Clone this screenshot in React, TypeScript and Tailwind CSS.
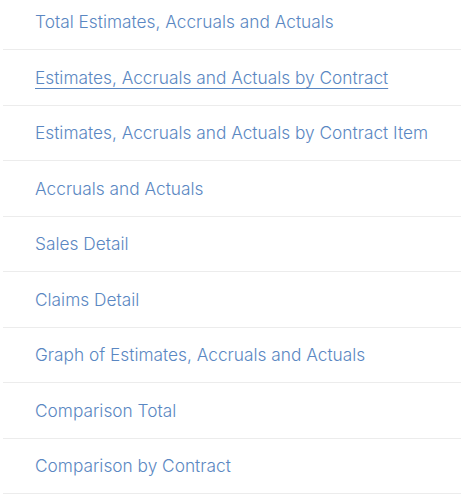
import React from "react";

const items = [
  "Total Estimates, Accruals and Actuals",
  "Estimates, Accruals and Actuals by Contract",
  "Estimates, Accruals and Actuals by Contract Item",
  "Accruals and Actuals",
  "Sales Detail",
  "Claims Detail",
  "Graph of Estimates, Accruals and Actuals",
  "Comparison Total",
  "Comparison by Contract",
];

export default function App() {
  return (
    <div className="w-[461px] h-[499px] overflow-hidden bg-white" style={{ fontFamily: 'Inter, "Liberation Sans", Arial, sans-serif' }}>
      <ul className="mt-[-5.5px] pl-[3px]">
        {items.map((t, i) => (
          <li key={t} className="h-[55.5px] flex items-center border-b border-[#ececec] pl-[32px]">
            <a
              href="#"
              className={`text-[17.3px] leading-none font-light text-[#5a87c2] ${i === 1 ? "underline underline-offset-[4px] decoration-[1px]" : "no-underline"}`}
            >
              {t}
            </a>
          </li>
        ))}
      </ul>
    </div>
  );
}
